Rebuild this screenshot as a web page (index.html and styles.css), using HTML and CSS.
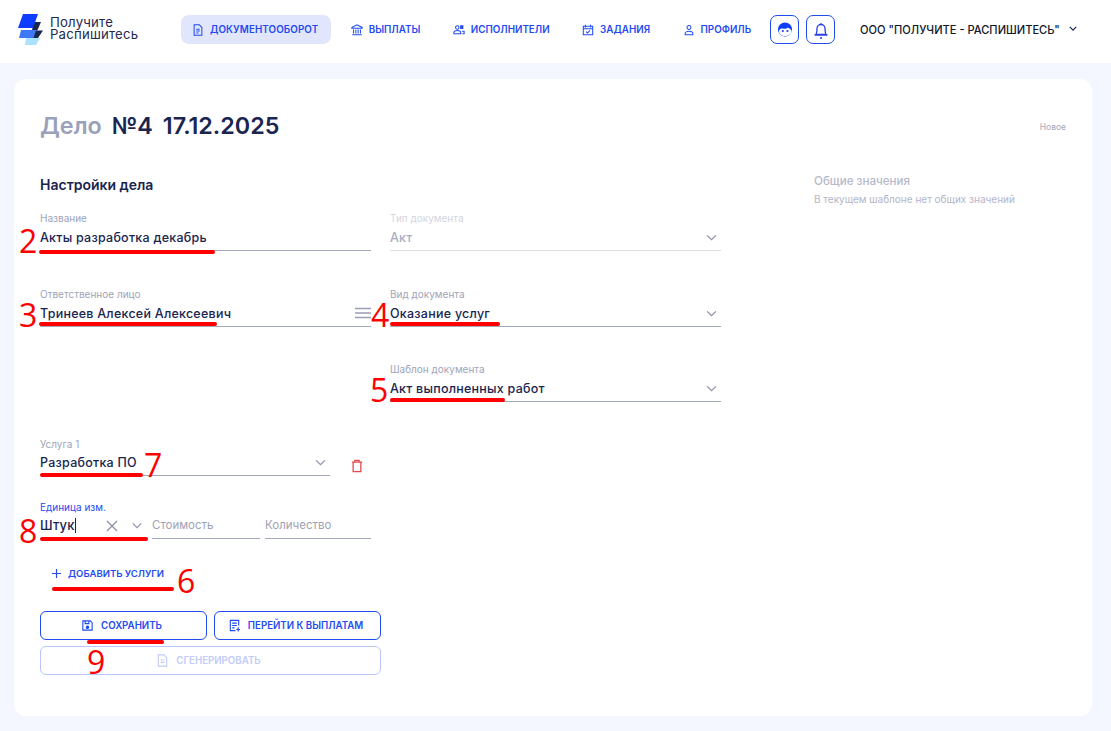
FILE: index.html
```html
<!DOCTYPE html>
<html lang="ru">
<head>
<meta charset="utf-8">
<title>Дело №4</title>
<link rel="stylesheet" href="styles.css">
</head>
<body>
<header class="topbar">
  <div class="brand">
    <svg class="brand-mark" viewBox="0 0 26 32" width="26" height="32">
      <path d="M9 24H23L19 31H8z" fill="#a9e3ff"/>
      <path d="M4 16H20L17 24H2z" fill="#3f78f5"/>
      <path d="M19 16.500H26L21 24H16.500z" fill="#1a2550"/>
      <path d="M17 8H24L20.500 16H15z" fill="#1a2550"/>
      <path d="M6 0H21L16 14H1z" fill="#0f3dff"/>
    </svg>
    <div class="brand-text">Получите<br>Распишитесь</div>
  </div>
  <nav class="nav">
    <a class="nav-item active"><svg class="ico" viewBox="0 0 14 14"><path d="M2.500 1h6l3 3v9h-9zM5 6h4M5 8.200h4M5 10.400h2.500"/></svg>ДОКУМЕНТООБОРОТ</a>
    <a class="nav-item"><svg class="ico" viewBox="0 0 14 14"><path d="M1 4 7 1l6 3v1H1zM3 6.500v4.500M5.700 6.500v4.500M8.300 6.500v4.500M11 6.500v4.500M1.500 12.500h11"/></svg>ВЫПЛАТЫ</a>
    <a class="nav-item"><svg class="ico" viewBox="0 0 14 14"><circle cx="5" cy="4" r="2"/><path d="M9 2.200h2.500v3H9z" fill="#1f4bf0"/><path d="M1 11.500V10c0-1.500 2-2.500 4-2.500s4 1 4 2.500v1.500zM10.500 8.500h2.500v3h-2"/></svg>ИСПОЛНИТЕЛИ</a>
    <a class="nav-item"><svg class="ico" viewBox="0 0 14 14"><path d="M1.500 2.500h11v10h-11zM1.500 5.500h11M4 1v3M10 1v3M4.800 9l1.600 1.500L9.300 7.500"/></svg>ЗАДАНИЯ</a>
    <a class="nav-item"><svg class="ico" viewBox="0 0 14 14"><circle cx="7" cy="4" r="2.300"/><path d="M2.500 12.500v-1.500c0-1.500 2-2.500 4.500-2.500s4.500 1 4.500 2.500v1.500z"/></svg>ПРОФИЛЬ</a>
  </nav>
  <div class="icon-buttons">
    <button class="square-btn"><svg viewBox="0 0 18 18" width="18" height="18"><circle cx="9" cy="8.500" r="7" fill="#0f3dff"/><path d="M3 10c0-1.500 2-3 3.500-2.500C8 8 11 8 12 6.500c1 1 3.500 2 3.500 3.500 0 3-3 5-6.500 5s-6-2-6-5z" fill="#fff"/><circle cx="6.800" cy="10" r="1.100" fill="#0f3dff"/><circle cx="11.400" cy="10" r="1.100" fill="#0f3dff"/></svg></button>
    <button class="square-btn"><svg viewBox="0 0 18 20" width="18" height="20" fill="none" stroke="#2a3fe6" stroke-width="1.300"><path d="M4 14.500c.8-1.500 1-3 1-6a4 4 0 0 1 8 0c0 3 .2 4.500 1 6zM2.500 15h13M9 4.500V3"/><path d="M8 18h2" stroke-width="1.600"/></svg></button>
  </div>
  <div class="company">ООО "ПОЛУЧИТЕ - РАСПИШИТЕСЬ"<svg class="company-chev" viewBox="0 0 10 6" width="8" height="5"><path d="M1 1l4 4 4-4" fill="none" stroke="#1a2550" stroke-width="1.500"/></svg></div>
</header>

<main class="main">
  <section class="card">
    <div class="title-row">
      <h1 class="title"><span class="title-muted">Дело</span><span>№4</span><span>17.12.2025</span></h1>
      <span class="status">Новое</span>
    </div>
    <div class="content">
      <div class="form">
        <h2 class="section-title">Настройки дела</h2>
        <div class="grid">
          <div class="col">
            <div class="field"><label class="label">Название</label><div class="control"><span class="value">Акты разработка декабрь</span></div></div>
            <div class="field"><label class="label">Ответственное лицо</label><div class="control"><span class="value">Тринеев Алексей Алексеевич</span><svg class="burger" viewBox="0 0 16 12" width="16" height="12"><path d="M0 1.500h16M0 6h16M0 10.500h16" stroke="#9a9fb5" stroke-width="1.500"/></svg></div></div>
          </div>
          <div class="col">
            <div class="field disabled"><label class="label">Тип документа</label><div class="control"><span class="value">Акт</span><svg class="chev" viewBox="0 0 12 8" width="11" height="7"><path d="M1 1.500l5 5 5-5"/></svg></div></div>
            <div class="field"><label class="label">Вид документа</label><div class="control"><span class="value">Оказание услуг</span><svg class="chev" viewBox="0 0 12 8" width="11" height="7"><path d="M1 1.500l5 5 5-5"/></svg></div></div>
            <div class="field"><label class="label">Шаблон документа</label><div class="control"><span class="value">Акт выполненных работ</span><svg class="chev" viewBox="0 0 12 8" width="11" height="7"><path d="M1 1.500l5 5 5-5"/></svg></div></div>
          </div>
        </div>

        <div class="service-row">
          <div class="field service"><label class="label">Услуга 1</label><div class="control"><span class="value">Разработка ПО</span><svg class="chev" viewBox="0 0 12 8" width="11" height="7"><path d="M1 1.500l5 5 5-5"/></svg></div></div>
          <svg class="trash" viewBox="0 0 14 16" width="12" height="14"><path d="M1 3.500h12M4.500 3V1.500h5V3M2.500 3.500v11h9v-11" fill="none" stroke="#e5484d" stroke-width="1.500"/></svg>
        </div>

        <div class="units">
          <div class="field unit focus"><label class="label">Единица изм.</label><div class="control"><span class="value caret">Штук</span><svg class="clear" viewBox="0 0 12 12" width="12" height="12"><path d="M1 1l10 10M11 1L1 11" stroke="#8d92a8" stroke-width="1.400"/></svg><svg class="chev" viewBox="0 0 12 8" width="10" height="7"><path d="M1 1.500l5 5 5-5"/></svg></div></div>
          <div class="field cost"><div class="control"><span class="placeholder">Стоимость</span></div></div>
          <div class="field qty"><div class="control"><span class="placeholder">Количество</span></div></div>
        </div>

        <a class="add"><svg viewBox="0 0 10 10" width="9" height="9"><path d="M5 0v10M0 5h10" stroke="#1f4bf0" stroke-width="1.300"/></svg>ДОБАВИТЬ УСЛУГИ</a>

        <div class="actions">
          <button class="btn"><svg class="ico" viewBox="0 0 14 14"><path d="M2 2h8l2 2v8H2zM4.500 2v3h4V2"/><circle cx="7" cy="9" r="1.300" fill="#1f4bf0"/></svg>СОХРАНИТЬ</button>
          <button class="btn"><svg class="ico" viewBox="0 0 14 14"><path d="M11.500 7V1.500h-9v11H8M4.500 4.500h5M4.500 7h5M4.500 9.500h2.500M11 9v4.500M9 11.300h4"/></svg>ПЕРЕЙТИ К ВЫПЛАТАМ</button>
          <button class="btn btn-disabled"><svg class="ico" viewBox="0 0 14 14"><path d="M2.500 1h6l3 3v9h-9zM5 6.500h4M5 9h4"/></svg>СГЕНЕРИРОВАТЬ</button>
        </div>
      </div>

      <aside class="side">
        <h3 class="side-title">Общие значения</h3>
        <p class="side-text">В текущем шаблоне нет общих значений</p>
      </aside>
    </div>
  </section>
</main>

<div class="marks">
  <i class="mark m2"></i><i class="mark m3"></i><i class="mark m4"></i><i class="mark m5"></i>
  <i class="mark m7"></i><i class="mark m8"></i><i class="mark m6"></i><i class="mark m9"></i>
  <b class="num n2">2</b><b class="num n3">3</b><b class="num n4">4</b><b class="num n5">5</b>
  <b class="num n7">7</b><b class="num n8">8</b><b class="num n6">6</b><b class="num n9">9</b>
</div>
</body>
</html>
```
FILE: styles.css
```css
* { box-sizing: border-box; }
html, body { margin: 0; height: 731px; overflow: hidden; }
body {
  background: #f4f7ff;
  font-family: Inter, "Noto Sans", sans-serif;
  color: #1a2550;
  position: relative;
}
.topbar {
  height: 63px;
  background: #fff;
  display: flex;
  align-items: center;
  padding: 0 0 4px 17px;
}
.brand { display: flex; align-items: center; gap: 7px; width: 164px; flex: none; }
.brand-mark { flex: none; }
.brand-text { font-size: 13.200px; line-height: 12px; letter-spacing: .2px; color: #1e2a4f; margin-bottom: 4px; }
.nav { display: flex; gap: 10.500px; }
.nav-item {
  display: flex;
  align-items: center;
  gap: 6px;
  height: 29px;
  padding: 0 11px;
  border-radius: 8px;
  font-size: 9.800px;
  font-weight: 600;
  color: #1f4bf0;
  white-space: nowrap;
}
.nav-item.active {
  background: #e1e6fd;
  margin-right: -1.500px;
  padding-right: 12.500px;
  letter-spacing: .1px;
}
.nav-item .ico { width: 12px; height: 12px; }
.ico {
  width: 13px;
  height: 13px;
  flex: none;
  fill: none;
  stroke: #1f4bf0;
  stroke-width: 1.200;
}
.icon-buttons { display: flex; gap: 7px; margin-left: 8px; }
.square-btn {
  width: 29px;
  height: 29px;
  padding: 0;
  display: flex;
  align-items: center;
  justify-content: center;
  background: #fff;
  border: 1px solid #1f4bf0;
  border-radius: 7px;
}
.company {
  display: flex;
  align-items: center;
  margin-left: 25px;
  font-size: 11.100px;
  font-weight: 500;
  color: #11162b;
  white-space: nowrap;
}
.company-chev { margin-left: 9px; margin-bottom: 3px; }
.main { padding: 16px 19px 15px 14px; }
.card {
  height: 637px;
  background: #fff;
  border-radius: 12px;
  padding: 31px 26px 0;
}
.title-row { display: flex; justify-content: space-between; align-items: center; height: 34px; }
.title {
  display: flex;
  gap: 10px;
  margin: 0;
  padding-bottom: 2px;
  font-size: 23.300px;
  line-height: 34px;
  font-weight: 600;
  color: #1a2550;
}
.title-muted { color: #9ba1b8; }
.status { font-size: 8.500px; color: #a4a8bb; }
.content { display: flex; margin-top: 31px; }
.form { width: 341px; flex: none; }
.section-title { margin: 0; font-size: 14px; line-height: 20px; font-weight: 600; color: #1a2550; }
.grid {
  display: grid;
  grid-template-columns: 331px 331px;
  gap: 19px;
  margin-top: 17px;
}
.col { display: flex; flex-direction: column; gap: 36.500px; }
.col .label { padding-bottom: 1px; }
.field { display: flex; flex-direction: column; }
.label { font-size: 10px; line-height: 12px; color: #a0a4b8; }
.control {
  display: flex;
  align-items: center;
  justify-content: space-between;
  height: 26px;
  border-bottom: 1px solid #a4a8bd;
}
.value { font-size: 12.500px; font-weight: 500; color: #1a2550; letter-spacing: .24px; }
.placeholder { font-size: 11.500px; color: #9ea2b6; padding-bottom: 2px; }
.chev { fill: none; stroke: #8d92a8; stroke-width: 1.400; flex: none; margin-right: 4px; }
.burger { flex: none; }
.disabled .label { color: #d3d5df; }
.disabled .value { color: #a9adc0; }
.disabled .control { border-bottom-color: #dcdee7; }
.service-row { display: flex; align-items: center; gap: 21px; margin-top: 36px; }
.service { width: 290px; }
.trash { flex: none; margin-top: 18px; }
.units { display: grid; grid-template-columns: 108px 107px 106px; gap: 5px; margin-top: 25px; align-items: end; }
.unit .label { color: #1f4bf0; }
.unit .value { font-size: 13px; letter-spacing: .2px; }
.unit .control { justify-content: flex-start; }
.caret { border-right: 1px solid #1a2550; margin-right: 30px; line-height: 15px; }
.clear { flex: none; margin-right: 14px; }
.unit .chev { margin-right: 0; }
.cost { margin-left: -1px; }
.add {
  display: flex;
  align-items: center;
  gap: 7px;
  margin: 27px 0 0 12px;
  height: 14px;
  font-size: 9.500px;
  font-weight: 600;
  color: #1f4bf0;
}
.actions { display: grid; grid-template-columns: 167px 167px; gap: 6px 7px; margin-top: 31px; }
.btn {
  display: flex;
  align-items: center;
  justify-content: center;
  gap: 7px;
  height: 29px;
  padding: 0 4px 0 0;
  background: #fff;
  border: 1px solid #1f4bf0;
  border-radius: 6px;
  font-family: inherit;
  font-size: 9.700px;
  font-weight: 600;
  color: #1f4bf0;
}
.btn-disabled {
  grid-column: 1 / span 2;
  border-color: #b9c6f9;
  color: #c1ccf9;
}
.btn-disabled .ico { stroke: #c1ccf9; }
.side { margin-left: 433px; width: 230px; }
.side-title { margin: 0; font-size: 11.600px; line-height: 12px; font-weight: 500; color: #b6b9c9; }
.side-text { margin: 6px 0 0; font-size: 10px; line-height: 12px; color: #b3b6c7; }

.marks { position: absolute; inset: 0; pointer-events: none; }
.mark { position: absolute; height: 4px; background: #fe0000; border-radius: 2px; }
.m2 { left: 39px; top: 250px; width: 176px; }
.m3 { left: 39px; top: 322px; width: 178px; }
.m4 { left: 390px; top: 322px; width: 110px; }
.m5 { left: 390px; top: 398px; width: 115px; }
.m7 { left: 40px; top: 473px; width: 103px; }
.m8 { left: 40px; top: 537px; width: 108px; }
.m6 { left: 52px; top: 587px; width: 122px; }
.m9 { left: 87px; top: 640px; width: 77px; }
.num {
  position: absolute;
  font-family: "Open Sans", sans-serif;
  font-weight: 400;
  font-size: 32px;
  line-height: 32px;
  color: #fe0000;
}
.n2 { left: 19px; top: 225px; }
.n3 { left: 19px; top: 299px; }
.n4 { left: 371px; top: 299px; }
.n5 { left: 370px; top: 374px; }
.n7 { left: 144px; top: 449px; }
.n8 { left: 19px; top: 515px; }
.n6 { left: 177px; top: 565px; }
.n9 { left: 87px; top: 646px; }
```
